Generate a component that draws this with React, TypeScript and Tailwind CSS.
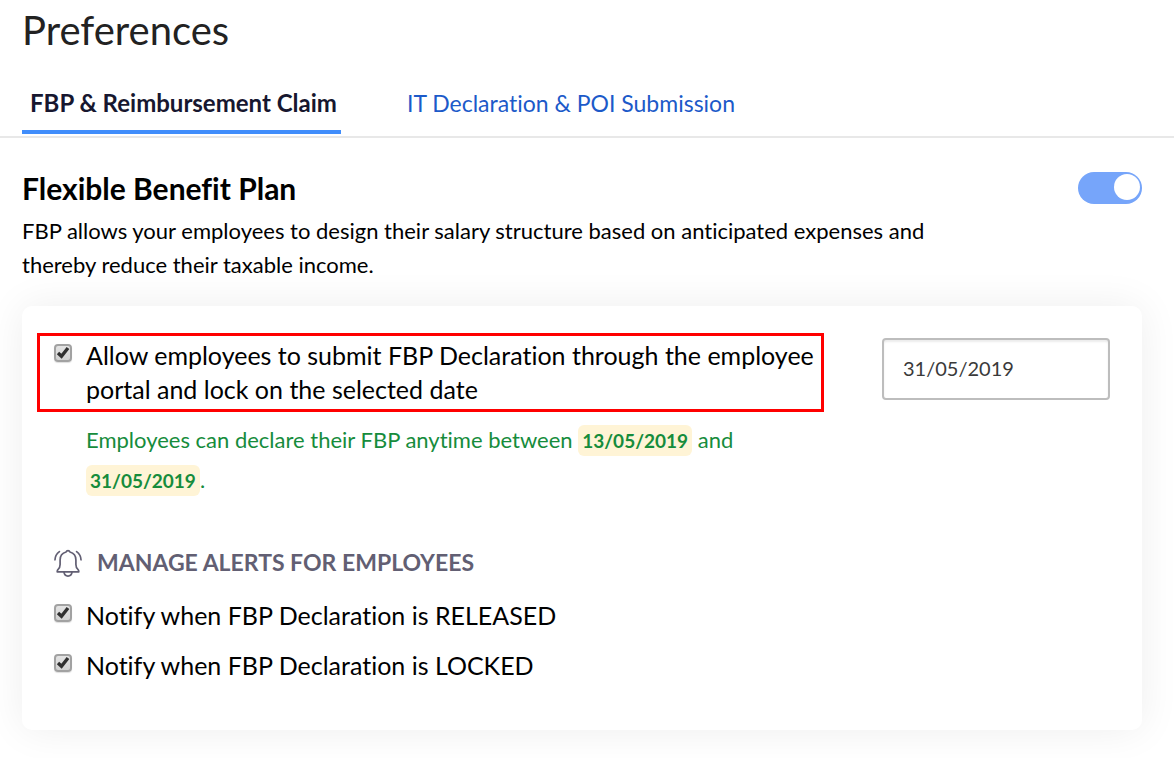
import { useState } from 'react';
import clsx from 'clsx';

const TABS = [
  { id: 'fbp', label: 'FBP & Reimbursement Claim' },
  { id: 'it', label: 'IT Declaration & POI Submission' },
];

const ALERTS = [
  { id: 'released', label: 'Notify when FBP Declaration is RELEASED' },
  { id: 'locked', label: 'Notify when FBP Declaration is LOCKED' },
];

function BellIcon() {
  return (
    <svg
      className="h-7 w-7 shrink-0 overflow-visible text-[#625f73]"
      viewBox="0 -1 28 28"
      fill="none"
      stroke="currentColor"
      strokeWidth="1.7"
      strokeLinecap="round"
      strokeLinejoin="round"
      aria-hidden="true"
    >
      <path d="M12.1 3a2 2 0 0 1 3.8 0c4 1 6 3.900 6 7.900v4.600c0 2.200.5 3.600 2 4.800.7.600.9 1.200.9 2.500H3.200c0-1.300.2-1.900.9-2.500 1.500-1.200 2-2.600 2-4.800v-4.600c0-4 2-6.900 6-7.900Z" />
      <path d="M10 23.200c.3 2.500 1.800 3.900 4 3.900s3.700-1.400 4-3.900" />
      <path d="M5.400 2.600C2.700 4.600 1.100 7.400 1 10.800M22.600 2.600c2.700 2 4.300 4.800 4.400 8.200" />
    </svg>
  );
}

interface CheckFieldProps {
  id: string;
  label: string;
}

function CheckField({ id, label }: CheckFieldProps) {
  return (
    <div className="flex items-start gap-3.5">
      <span className="relative mt-1.5 h-[18px] w-[18px] shrink-0">
        <input
          id={id}
          type="checkbox"
          defaultChecked
          className="peer block h-[18px] w-[18px] appearance-none rounded border-2 border-[#a2a2a2] bg-linear-to-b from-[#e4e4e4] to-[#d2d2d2] shadow-[0_1px_1px_#00000022]"
        />
        <svg
          className="pointer-events-none invisible absolute inset-0 peer-checked:visible"
          viewBox="0 0 18 18"
          fill="none"
          stroke="#303030"
          strokeWidth="3.4"
          aria-hidden="true"
        >
          <path d="M4 9 7.500 12.300 14 4" />
        </svg>
      </span>
      <label htmlFor={id} className="text-[25px] leading-[34px] text-black">
        {label}
      </label>
    </div>
  );
}

function DateMark({ children }: { children: string }) {
  return (
    <strong className="rounded-md bg-[#fff4d6] px-1 py-1 text-[19px] leading-6 font-bold">{children}</strong>
  );
}

export default function App() {
  const [activeTab, setActiveTab] = useState('fbp');
  const [enabled, setEnabled] = useState(true);
  const [lockDate, setLockDate] = useState('31/05/2019');

  return (
    <main className="bg-white pb-7 font-[Lato,sans-serif] text-black [font-variant-ligatures:none]">
      <h1 className="px-[22px] pt-1.5 text-[40px] leading-12 text-[#222]">Preferences</h1>

      <div role="tablist" className="mt-[18px] flex gap-[58px] border-b-2 border-[#e8e8e8] px-[22px] pb-0.5">
        {TABS.map((tab) => (
          <button
            key={tab.id}
            type="button"
            role="tab"
            aria-selected={activeTab === tab.id}
            onClick={() => setActiveTab(tab.id)}
            className={clsx(
              'h-[62px] border-b-4 pt-1 pr-1 pl-2',
              activeTab === tab.id
                ? 'border-[#408dfb] text-[24px] font-bold text-[#17172f]'
                : 'border-transparent text-[23px] text-[#1c5ac9]'
            )}
          >
            {tab.label}
          </button>
        ))}
      </div>

      <section className="pt-8 pr-8 pl-[22px]">
        <div className="flex items-center justify-between">
          <h2 id="fbp-title" className="text-[30px] leading-9 font-bold">
            Flexible Benefit Plan
          </h2>
          <input
            type="checkbox"
            role="switch"
            aria-labelledby="fbp-title"
            checked={enabled}
            onChange={(e) => setEnabled(e.target.checked)}
            className="flex h-8 w-16 shrink-0 appearance-none rounded-full bg-gray-300 px-0.5 pt-0.5 before:h-[26px] before:w-[26px] before:rounded-full before:bg-white checked:justify-end checked:bg-[#76a5fa]"
          />
        </div>
        <p className="mt-2 max-w-[920px] text-[22px] leading-[34px]">
          FBP allows your employees to design their salary structure based on anticipated expenses and
          thereby reduce their taxable income.
        </p>

        <div className="mt-6 rounded-[10px] bg-white pt-[27px] pr-8 pb-12 pl-[15px] shadow-[0_0_40px_#00000012]">
          <div className="flex items-start justify-between gap-8">
            <div className="w-[787px]">
              <div className="border-3 border-[#ff0000] pt-[2px] pb-[3px] pl-3.5">
                <CheckField
                  id="allow"
                  label="Allow employees to submit FBP Declaration through the employee portal and lock on the selected date"
                />
              </div>
              <p className="mt-2 max-w-[720px] pl-[49px] text-[22px] leading-10 text-[#168c3c]">
                Employees can declare their FBP anytime between <DateMark>13/05/2019</DateMark> and{' '}
                <DateMark>31/05/2019</DateMark>.
              </p>
            </div>
            <input
              type="text"
              aria-label="Lock date"
              value={lockDate}
              onChange={(e) => setLockDate(e.target.value)}
              className="mt-[5px] h-[62px] w-[228px] shrink-0 rounded border-2 border-[#bdbdbd] px-[19px] pb-0.5 text-[20px] text-[#3a3a3a] shadow-[inset_0_2px_2px_#00000014]"
            />
          </div>

          <div className="mt-11 pl-[17px]">
            <h3 className="flex items-center gap-[15px] text-[23px] leading-9 font-bold text-[#625f73]">
              <BellIcon />
              MANAGE ALERTS FOR EMPLOYEES
            </h3>
            <div className="mt-[18px] flex flex-col gap-4">
              {ALERTS.map((alert) => (
                <CheckField key={alert.id} id={alert.id} label={alert.label} />
              ))}
            </div>
          </div>
        </div>
      </section>
    </main>
  );
}
